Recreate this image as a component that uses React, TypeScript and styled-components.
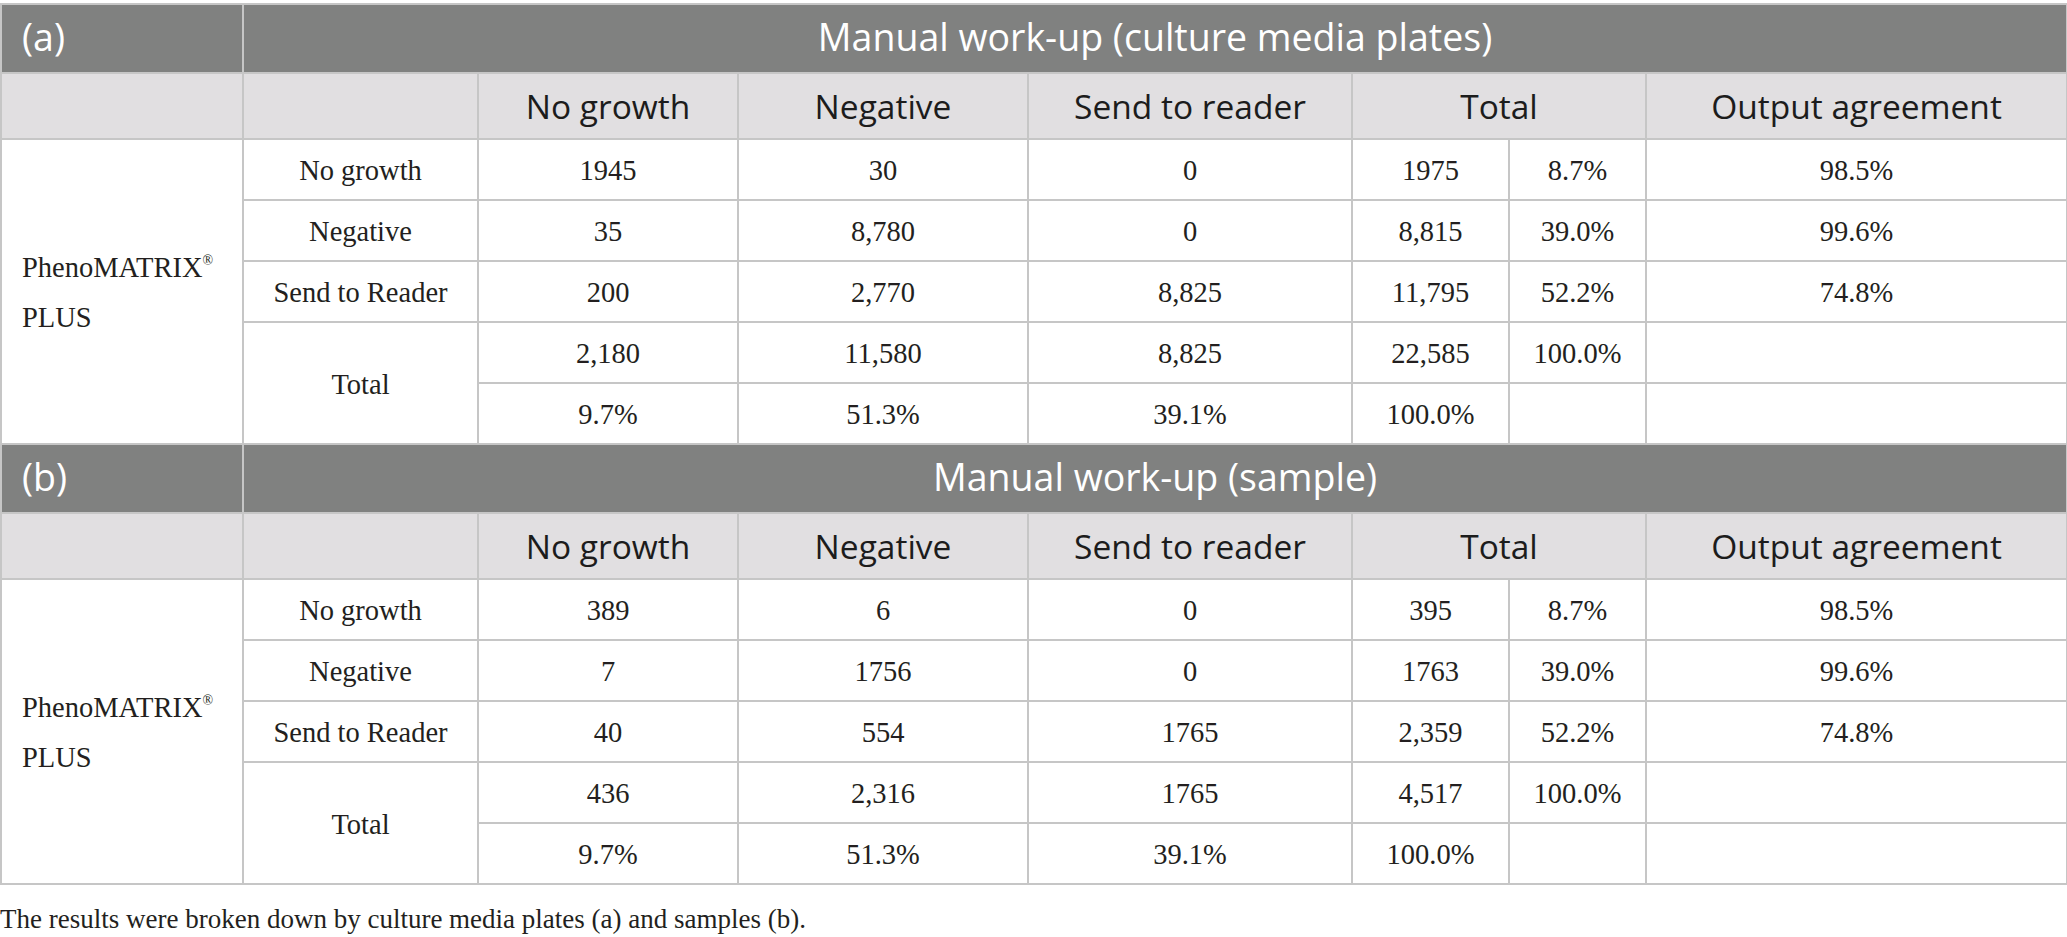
import React from "react";
import styled, { createGlobalStyle } from "styled-components";

const GlobalStyle = createGlobalStyle`
  html, body {
    margin: 0;
    padding: 0;
    background: #ffffff;
  }
  body {
    font-family: "Liberation Serif", "Times New Roman", serif;
    color: #231f20;
  }
`;

const Page = styled.div`
  padding-top: 3px;
  width: 2067px;
`;

const Table = styled.table`
  width: 2066px;
  border-collapse: collapse;
  table-layout: fixed;
  border: 2px solid #c6c6c6;
`;

const TitleRow = styled.tr`
  height: 69px;
  background: #808180;
`;

const TitleCell = styled.th<{ $align?: "left" | "center" }>`
  border: 2px solid #c6c6c6;
  padding: 0 0 4px ${(p) => (p.$align === "left" ? "20px" : "0")};
  text-align: ${(p) => p.$align ?? "center"};
  font-family: "Open Sans", "Noto Sans", sans-serif;
  font-weight: 400;
  font-size: 37.5px;
  color: #ffffff;
`;

const HeadRow = styled.tr`
  height: 66px;
  background: #e1dfe1;
`;

const HeadCell = styled.th`
  border: 2px solid #c6c6c6;
  padding: 0;
  text-align: center;
  font-family: "Open Sans", "Noto Sans", sans-serif;
  font-weight: 400;
  font-size: 33.5px;
  color: #1c1c1c;
`;

const BodyRow = styled.tr`
  height: 61px;
`;

const Cell = styled.td<{ $align?: "left" | "center" }>`
  border: 2px solid #c6c6c6;
  padding: 3px 0 0 ${(p) => (p.$align === "left" ? "20px" : "0")};
  text-align: ${(p) => p.$align ?? "center"};
  vertical-align: middle;
  font-size: 28.5px;
  line-height: ${(p) => (p.$align === "left" ? "50px" : "34px")};
  color: #231f20;
`;

const Reg = styled.sup`
  font-size: 14px;
  vertical-align: 12px;
  line-height: 0;
`;

const Caption = styled.p`
  margin: 19px 0 0;
  font-size: 27px;
  color: #231f20;
`;

type Section = {
  tag: string;
  title: string;
  rows: string[][];
  totals: string[];
  shares: string[];
};

const sections: Section[] = [
  {
    tag: "(a)",
    title: "Manual work-up (culture media plates)",
    rows: [
      ["No growth", "1945", "30", "0", "1975", "8.7%", "98.5%"],
      ["Negative", "35", "8,780", "0", "8,815", "39.0%", "99.6%"],
      ["Send to Reader", "200", "2,770", "8,825", "11,795", "52.2%", "74.8%"],
    ],
    totals: ["2,180", "11,580", "8,825", "22,585", "100.0%", ""],
    shares: ["9.7%", "51.3%", "39.1%", "100.0%", "", ""],
  },
  {
    tag: "(b)",
    title: "Manual work-up (sample)",
    rows: [
      ["No growth", "389", "6", "0", "395", "8.7%", "98.5%"],
      ["Negative", "7", "1756", "0", "1763", "39.0%", "99.6%"],
      ["Send to Reader", "40", "554", "1765", "2,359", "52.2%", "74.8%"],
    ],
    totals: ["436", "2,316", "1765", "4,517", "100.0%", ""],
    shares: ["9.7%", "51.3%", "39.1%", "100.0%", "", ""],
  },
];

const widths = [242, 235, 260, 290, 324, 157, 137, 421];

const SectionRows = ({ section }: { section: Section }) => (
  <>
    <TitleRow>
      <TitleCell $align="left">{section.tag}</TitleCell>
      <TitleCell colSpan={7}>{section.title}</TitleCell>
    </TitleRow>
    <HeadRow>
      <HeadCell />
      <HeadCell />
      <HeadCell>No growth</HeadCell>
      <HeadCell>Negative</HeadCell>
      <HeadCell>Send to reader</HeadCell>
      <HeadCell colSpan={2}>Total</HeadCell>
      <HeadCell>Output agreement</HeadCell>
    </HeadRow>
    {section.rows.map((row, i) => (
      <BodyRow key={row[0]}>
        {i === 0 && (
          <Cell rowSpan={5} $align="left">
            PhenoMATRIX<Reg>®</Reg>
            <br />
            PLUS
          </Cell>
        )}
        {row.map((v, j) => (
          <Cell key={j}>{v}</Cell>
        ))}
      </BodyRow>
    ))}
    <BodyRow>
      <Cell rowSpan={2}>Total</Cell>
      {section.totals.map((v, j) => (
        <Cell key={j}>{v}</Cell>
      ))}
    </BodyRow>
    <BodyRow>
      {section.shares.map((v, j) => (
        <Cell key={j}>{v}</Cell>
      ))}
    </BodyRow>
  </>
);

export default function App() {
  return (
    <Page>
      <GlobalStyle />
      <Table>
        <colgroup>
          {widths.map((w, i) => (
            <col key={i} style={{ width: w }} />
          ))}
        </colgroup>
        <tbody>
          {sections.map((s) => (
            <SectionRows key={s.tag} section={s} />
          ))}
        </tbody>
      </Table>
      <Caption>
        The results were broken down by culture media plates (a) and samples (b).
      </Caption>
    </Page>
  );
}
